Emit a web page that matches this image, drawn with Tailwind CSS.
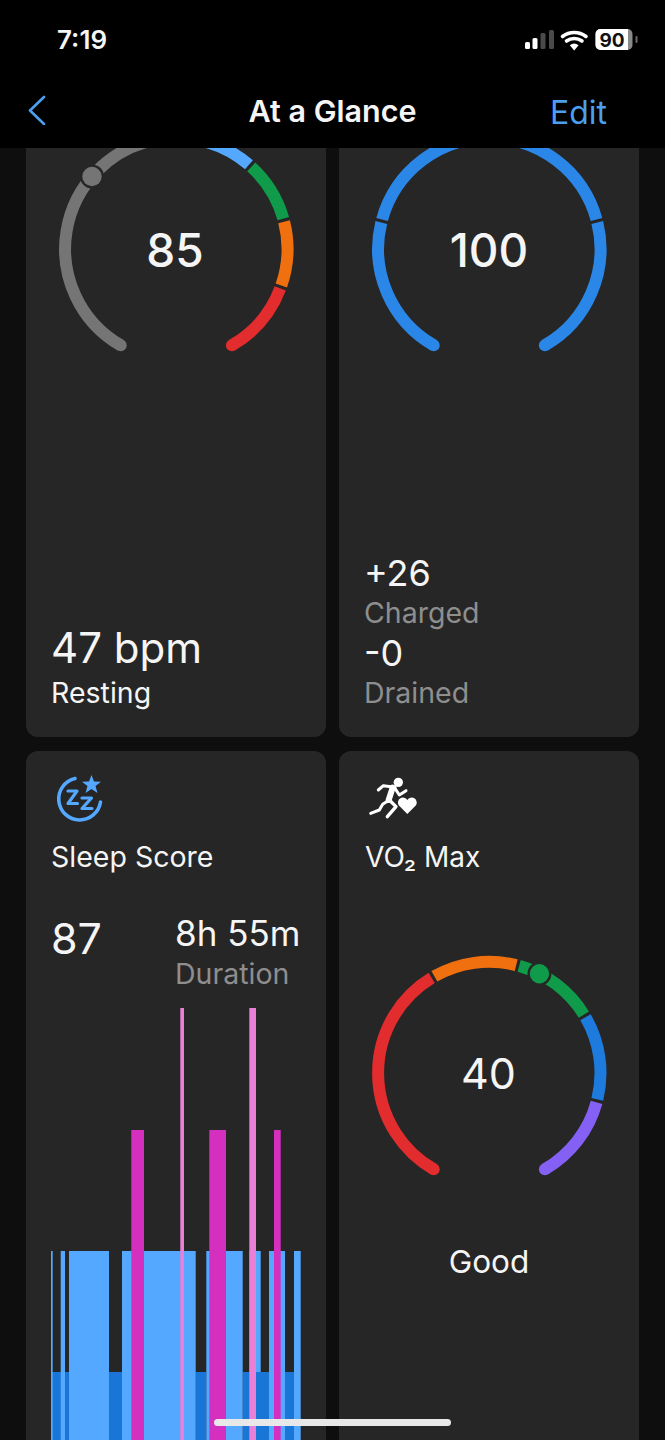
<!DOCTYPE html>
<html lang="en">
<head>
  <meta charset="UTF-8">
  <title>At a Glance</title>
  <script src="https://cdn.jsdelivr.net/npm/@tailwindcss/browser@4"></script>
</head>
<body class="bg-[#0e0e0e] font-['Inter','Liberation_Sans',sans-serif] text-[#f5f5f5]">
  <div class="relative h-[1440px] w-[665px] overflow-hidden flex flex-col">

    <!-- status bar + nav -->
    <header class="h-[148px] shrink-0 bg-black">
      <div class="h-[80px] pl-[57px] pr-[27px] pt-[25px] flex justify-between items-start">
        <span class="text-[26px] leading-[30px] font-semibold">7:19</span>
        <svg width="114" height="26" viewBox="0 0 114 26" class="mt-[2px]">
          <rect x="1" y="15" width="5" height="7" rx="1.5" fill="#fff"/>
          <rect x="8.5" y="11" width="5" height="11" rx="1.5" fill="#fff"/>
          <rect x="16.5" y="6" width="5" height="16" rx="1.5" fill="#4a4a4a"/>
          <rect x="25" y="3" width="5" height="19" rx="1.5" fill="#4a4a4a"/>
          <path d="M38.5 9.5 A19 19 0 0 1 62 9.5 M42.5 14 A13 13 0 0 1 58 14" fill="none" stroke="#fff" stroke-width="3.6" stroke-linecap="round"/>
          <path d="M50.2 23.5 L45.8 18.3 A7 7 0 0 1 54.6 18.3 Z" fill="#fff"/>
          <rect x="71.5" y="2" width="37" height="21" rx="5" fill="#8a8a8a"/>
          <path d="M76.5 2 H104 V23 H76.5 A5 5 0 0 1 71.5 18 V7 A5 5 0 0 1 76.5 2 Z" fill="#fff"/>
          <rect x="111.5" y="9" width="2" height="7" rx="1" fill="#6b6b6b"/>
          <text x="88" y="19.5" text-anchor="middle" font-size="19" font-weight="700" fill="#111">90</text>
        </svg>
      </div>
      <nav class="relative h-[62px] flex items-center justify-between pl-[27px] pr-[58px]">
        <svg width="19" height="30" viewBox="0 0 19 30" class="-mt-[2px]"><path d="M17 2 L3 15.5 L17 29" fill="none" stroke="#4a9fee" stroke-width="2.6" stroke-linecap="round" stroke-linejoin="round"/></svg>
        <h1 class="absolute left-0 right-0 text-center text-[30.5px] font-semibold leading-[36px]">At a Glance</h1>
        <span class="text-[32px] leading-[36px] text-[#4a9fee] mt-[3px]">Edit</span>
      </nav>
    </header>

    <main class="flex-1 overflow-hidden px-[26px] grid grid-cols-2 gap-x-[13px] gap-y-[14px] content-start">

      <!-- heart rate -->
      <section class="relative h-[589px] rounded-b-[12px] bg-[#262626] overflow-hidden flex flex-col pl-[25px] pb-[25px]">
        <svg id="g-heart" class="absolute left-0 top-0" width="300" height="230" viewBox="0 -1 300 230"></svg>
        <div class="absolute left-0 w-[298px] top-[76px] text-center text-[46px] leading-[52px] font-medium">85</div>
        <div class="mt-auto text-[42px] leading-[52px]">47 bpm</div>
        <div class="text-[28.5px] leading-[38px]">Resting</div>
      </section>

      <!-- body battery -->
      <section class="relative h-[589px] rounded-b-[12px] bg-[#262626] overflow-hidden flex flex-col pl-[25px] pb-[25px]">
        <svg id="g-battery" class="absolute left-0 top-0" width="300" height="230" viewBox="0 -1 300 230"></svg>
        <div class="absolute left-0 w-full top-[76px] text-center text-[46px] leading-[52px] font-medium">100</div>
        <div class="mt-auto text-[36px] leading-[42px]">+26</div>
        <div class="text-[28.5px] leading-[38px] text-[#8e8e8e]">Charged</div>
        <div class="text-[36px] leading-[42px]">-0</div>
        <div class="text-[28.5px] leading-[38px] text-[#8e8e8e]">Drained</div>
      </section>

      <!-- sleep score -->
      <section class="h-[720px] rounded-[12px] bg-[#262626] overflow-hidden pt-[22px]">
        <svg class="ml-[26px] h-[54px] w-[56px]" viewBox="0 0 56 54">
          <path d="M23 5.5 A21 21 0 1 0 48.5 29" fill="none" stroke="#55a8ff" stroke-width="3.6" stroke-linecap="round"/>
          <path d="M39.5 2 L42 8.5 L49 8.8 L43.5 13 L45.5 20 L39.5 16 L33.5 20 L35.5 13 L30 8.8 L37 8.5 Z" fill="#55a8ff"/>
          <polyline points="16,18 25,18 16,30.5 25.5,30.5" fill="none" stroke="#55a8ff" stroke-width="3.2" stroke-linejoin="round" stroke-linecap="round"/>
          <polyline points="30,25 39.5,25 30,35.5 40,35.5" fill="none" stroke="#55a8ff" stroke-width="3.2" stroke-linejoin="round" stroke-linecap="round"/>
        </svg>
        <div class="pl-[25px] text-[28.5px] leading-[38px] mt-[11px]">Sleep Score</div>
        <div class="flex pl-[25px] mt-[37px]">
          <div class="w-[125px] text-[43px] leading-[50px] mt-0">87</div>
          <div class="-ml-[1px]">
            <div class="text-[35px] leading-[40px]">8h 55m</div>
            <div class="text-[28.5px] leading-[40px] text-[#8e8e8e] mt-[1px]">Duration</div>
          </div>
        </div>
        <svg class="mt-[14px]" width="300" height="450" viewBox="26 1008 300 450">
          <g fill="#1a76d6">
            <rect x="51" y="1372" width="18" height="80"/>
            <rect x="109" y="1372" width="13" height="80"/>
            <rect x="195.7" y="1372" width="10.6" height="80"/>
            <rect x="242.7" y="1372" width="26.3" height="80"/>
            <rect x="285" y="1372" width="9" height="80"/>
          </g>
          <g fill="#55a8ff">
            <rect x="51" y="1251" width="1.7" height="200"/>
            <rect x="60.7" y="1251" width="4.3" height="200"/>
            <rect x="69" y="1251" width="40" height="200"/>
            <rect x="122" y="1251" width="73.7" height="200"/>
            <rect x="206.3" y="1251" width="36.4" height="200"/>
            <rect x="249.5" y="1251" width="11.2" height="121"/>
            <rect x="269" y="1251" width="16" height="200"/>
            <rect x="294" y="1251" width="6.7" height="200"/>
          </g>
          <g fill="#d52fbf">
            <rect x="131.3" y="1130" width="12.7" height="320"/>
            <rect x="209.3" y="1130" width="16.7" height="320"/>
            <rect x="274" y="1130" width="6.7" height="320"/>
          </g>
          <g fill="#ea7fd8">
            <rect x="180.3" y="1008" width="3.7" height="450"/>
            <rect x="249.3" y="1008" width="6.7" height="450"/>
          </g>
        </svg>
      </section>

      <!-- vo2 max -->
      <section class="relative h-[720px] rounded-[12px] bg-[#262626] overflow-hidden pt-[22px]">
        <svg class="ml-[27px] h-[54px] w-[56px]" viewBox="78 84 168 162">
          <circle cx="175" cy="112" r="14" fill="#fff"/>
          <g fill="none" stroke="#fff" stroke-linecap="round" stroke-linejoin="round">
            <polyline points="115,135 130,122 165,127" stroke-width="9"/>
            <path d="M158 128 L146 165" stroke-width="18"/>
            <polyline points="165,130 178,150 198,137" stroke-width="9"/>
            <polyline points="148,165 128,178 118,195 92,205" stroke-width="9"/>
            <polyline points="148,165 168,185 142,215" stroke-width="10"/>
          </g>
          <path d="M202 207 L176 181 A15 15 0 0 1 202 165 A15 15 0 0 1 228 181 Z" fill="#fff" stroke="#262626" stroke-width="4" paint-order="stroke"/>
        </svg>
        <div class="pl-[26px] text-[28px] leading-[38px] mt-[11px]">VO₂ Max</div>
        <svg id="g-vo2" class="absolute left-0 top-[192px]" width="300" height="240" viewBox="0 -30 300 240"></svg>
        <div class="absolute left-0 w-[299px] top-[296px] text-center text-[43px] leading-[52px]">40</div>
        <div class="absolute left-0 w-full top-[491px] text-center text-[31.5px] leading-[40px]">Good</div>
      </section>
    </main>

    <!-- home indicator -->
    <div class="absolute left-[214px] top-[1419px] h-[7px] w-[237px] rounded-full bg-[#e8e8e8]"></div>
  </div>

  <script>
    const CX = 150.3, CY = 100, R = 111.2;
    const CARD = '#262626';

    function pt(a) {
      const t = a * Math.PI / 180;
      return [CX + R * Math.sin(t), CY - R * Math.cos(t)];
    }

    function arc(from, to) {
      const p = pt(from), q = pt(to);
      return `M${p[0]} ${p[1]} A${R} ${R} 0 ${to - from > 180 ? 1 : 0} 1 ${q[0]} ${q[1]}`;
    }

    // segs: [from, to, colour] in degrees from 12 o'clock
    function gauge(id, segs, marker) {
      let out = '';
      segs.forEach((s, i) => {
        const a = i === 0 ? s[0] : s[0] + 0.8;
        const b = i === segs.length - 1 ? s[1] : s[1] - 0.8;
        out += `<path d="${arc(a, b)}" fill="none" stroke="${s[2]}" stroke-width="12"/>`;
      });
      const first = segs[0], last = segs[segs.length - 1];
      const p = pt(first[0]), q = pt(last[1]);
      out += `<circle cx="${p[0]}" cy="${p[1]}" r="6" fill="${first[2]}"/>`;
      out += `<circle cx="${q[0]}" cy="${q[1]}" r="6" fill="${last[2]}"/>`;
      if (marker) {
        const m = pt(marker[0]);
        out += `<circle cx="${m[0]}" cy="${m[1]}" r="12" fill="${CARD}"/>`;
        out += `<circle cx="${m[0]}" cy="${m[1]}" r="9.7" fill="${marker[1]}"/>`;
      }
      document.getElementById(id).innerHTML = out;
    }

    gauge('g-heart', [
      [-150, -10, '#757575'],
      [-10, 41.6, '#55a8ff'],
      [41.6, 75, '#0f9b4a'],
      [75, 110, '#f0700f'],
      [110, 150, '#e32c2e']
    ], [-49.3, '#757575']);

    gauge('g-battery', [
      [-150, -75.4, '#2a87e8'],
      [-75.4, 75.4, '#2a87e8'],
      [75.4, 150, '#2a87e8']
    ]);

    gauge('g-vo2', [
      [-150, -30.4, '#e32c2e'],
      [-30.4, 14.8, '#f0700f'],
      [14.8, 59.1, '#0f9b4a'],
      [59.1, 104.5, '#1c7bdc'],
      [104.5, 150, '#8560f5']
    ], [26.8, '#0f9b4a']);
  </script>
</body>
</html>
